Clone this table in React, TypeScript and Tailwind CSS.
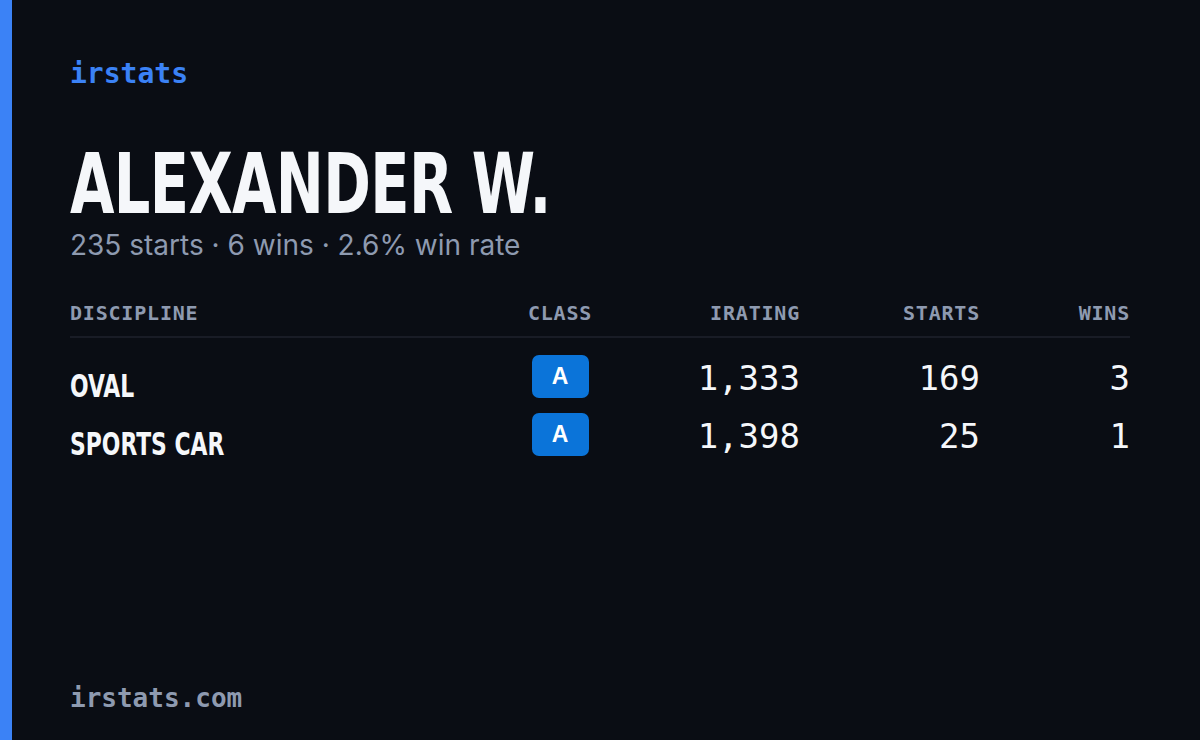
import React from 'react';

interface Row {
  discipline: string;
  klass: string;
  irating: string;
  starts: string;
  wins: string;
}

const rows: Row[] = [
  { discipline: 'OVAL', klass: 'A', irating: '1,333', starts: '169', wins: '3' },
  { discipline: 'SPORTS CAR', klass: 'A', irating: '1,398', starts: '25', wins: '1' },
];

const mono = "font-['DejaVu_Sans_Mono','Liberation_Mono',monospace]";
const narrow = "font-['DejaVu_Sans_Condensed','Liberation_Sans_Narrow','Liberation_Sans',sans-serif] [font-stretch:condensed]";
const cols = 'grid h-[44px] grid-cols-[425px_130px_175px_180px_150px] items-center';

const App: React.FC = () => {
  return (
    <div className="flex h-[740px] w-[1200px] bg-[#0a0d14] overflow-hidden">
      {/* accent bar */}
      <div className="w-[12px] shrink-0 bg-[#3b82f6]" />

      <div className="flex flex-1 flex-col pl-[58px] pt-[58px] pb-[27px]">
        <div className={`${mono} text-[28px] font-bold leading-[32px] text-[#3b82f6]`}>irstats</div>

        {/* Header */}
        <h1 className={`${narrow} mt-[56px] text-[84px] font-bold leading-[76px] text-[#f5f7fa] tracking-[-0.01em] origin-left scale-x-[0.76]`}>
          ALEXANDER W.
        </h1>
        <p className="mt-[6px] font-['Inter',sans-serif] text-[28px] leading-[34px] text-[#8e9ab0]">
          235 starts · 6 wins · 2.6% win rate
        </p>

        {/* Table */}
        <div className="mt-[38px] w-[1060px]">
          <div className={`grid grid-cols-[425px_130px_175px_180px_150px] items-center ${mono} border-b-2 border-[#191c26] pb-[10px] text-[20px] font-bold leading-[26px] tracking-[0.04em] text-[#8e9ab0]`}>
            <div>DISCIPLINE</div>
            <div className="text-center">CLASS</div>
            <div className="text-right">IRATING</div>
            <div className="text-right">STARTS</div>
            <div className="text-right">WINS</div>
          </div>

          <div className="mt-[12px] flex flex-col gap-[14px]">
            {rows.map((row) => (
              <div key={row.discipline} className={cols}>
                <div className={`${narrow} mt-[20px] text-[32px] font-bold leading-[32px] text-[#f5f7fa] origin-left scale-x-[0.76]`}>
                  {row.discipline}
                </div>
                <div className="flex justify-center">
                  <span className="flex h-[43px] w-[57px] items-center justify-center rounded-[7px] bg-[#0b74d9] font-['Liberation_Sans',sans-serif] text-[23px] font-bold text-white">
                    {row.klass}
                  </span>
                </div>
                <div className={`${mono} pt-[4px] text-right text-[34px] leading-[44px] text-[#f5f7fa]`}>{row.irating}</div>
                <div className={`${mono} pt-[4px] text-right text-[34px] leading-[44px] text-[#f5f7fa]`}>{row.starts}</div>
                <div className={`${mono} pt-[4px] text-right text-[34px] leading-[44px] text-[#f5f7fa]`}>{row.wins}</div>
              </div>
            ))}
          </div>
        </div>

        <div className={`${mono} mt-auto text-[26px] font-bold leading-[30px] text-[#8e9ab0]`}>irstats.com</div>
      </div>
    </div>
  );
};

export default App;
